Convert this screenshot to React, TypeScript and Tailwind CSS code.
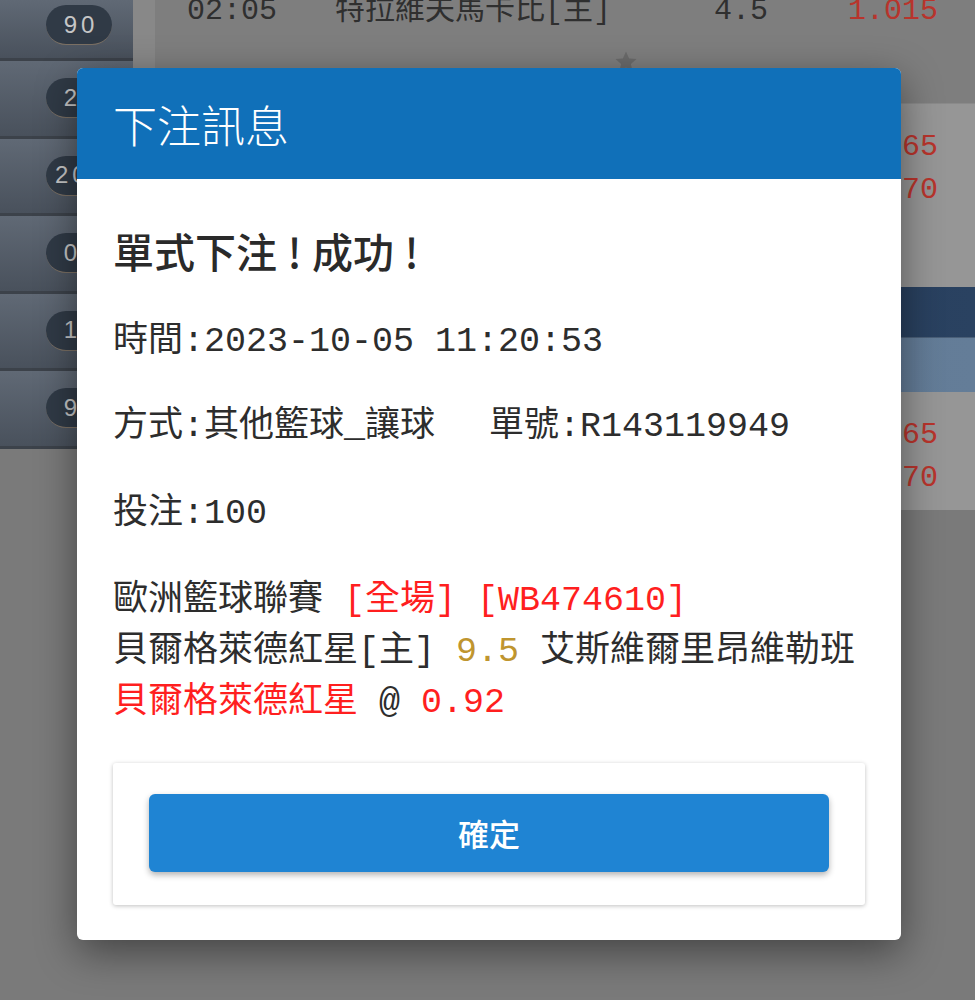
export default function App() {
  const badges = ["90", "25", "200", "05", "16", "98"];

  return (
    <div className="relative h-[1000px] w-[975px] overflow-hidden bg-[#7a7a7a] font-['Noto_Sans_CJK_TC',sans-serif]">
      {/* page behind the dialog */}
      <div className="flex">
        <aside className="w-[133px] shrink-0">
          {badges.map((b, i) => (
            <div
              key={i}
              className={`flex items-center justify-end border-b-[3px] border-[#3c424a] bg-gradient-to-b from-[#606975] to-[#49515c] pr-[21px] ${
                i === 0 ? "h-[61px] pb-[8px]" : "h-[77.5px]"
              }`}
            >
              <span className="flex h-[40px] w-[66px] items-center justify-center rounded-full border-b border-[#7b7064] bg-[#303a46] pl-[4px] font-['Liberation_Sans',sans-serif] text-[24px] tracking-[4px] text-[#c6c6c6]">
                {b}
              </span>
            </div>
          ))}
        </aside>

        <div className="h-[510px] w-[22px] shrink-0 bg-[#888888]" />

        <main className="min-w-0 flex-1 font-['Liberation_Mono','Noto_Sans_CJK_TC',monospace] text-[30px]">
          <div className="h-[103px] bg-[#7e7e7e]">
            <div className="flex pl-[32px] leading-[22px] text-[#2f2f2f]">
              <span className="w-[148px]">02:05</span>
              <span className="w-[379px]">特拉維夫馬卡比[主]</span>
              <span className="w-[134px]">4.5</span>
              <span className="text-[#b8342c]">1.015</span>
            </div>
            <div className="mt-[28px] pl-[459px]">
              <svg width="24" height="24" viewBox="0 0 24 24">
                <path
                  d="M12 1.5l3.1 6.9 7.4.7-5.6 5 1.7 7.4L12 17.6l-6.6 3.9 1.7-7.4-5.6-5 7.4-.7z"
                  fill="#6b6b6b"
                />
              </svg>
            </div>
          </div>

          <div className="h-[184px] border-t border-[#8a8a8a] bg-[#969696] pl-[693px] pt-[22px] leading-[43px] text-[#b8342c]">
            <div>1.865</div>
            <div>1.870</div>
          </div>

          <div className="h-[50px] bg-gradient-to-r from-[#203550] to-[#2a4261]" />
          <div className="h-[55px] border-t border-[#4a5f78] bg-gradient-to-r from-[#5a7390] to-[#647d98]" />

          <div className="h-[118px] bg-[#969696] pl-[693px] pt-[22px] leading-[43px] text-[#b8342c]">
            <div>1.865</div>
            <div>1.870</div>
          </div>
        </main>
      </div>

      {/* dialog */}
      <div className="absolute inset-0 flex items-start justify-center pl-[3px] pt-[68px]">
        <div className="w-[824px] overflow-hidden rounded-md bg-white shadow-[0_12px_40px_rgba(0,0,0,0.45)]">
          <div className="flex h-[111px] items-center bg-[#1070b9] px-[36px]">
            <h2 className="text-[44px] font-light leading-none text-white">下注訊息</h2>
          </div>

          <div className="px-[36px] pb-[35px] pt-[46px] text-[#2d2d2d]">
            <h3 className="text-[41px] font-medium leading-[50px] text-[#2a2a2a]">
              單式下注<span className="inline-block w-[35px] text-center">!</span>成功
              <span className="inline-block w-[35px] text-center">!</span>
            </h3>

            <div className="font-['Liberation_Mono','Noto_Sans_CJK_TC',monospace] text-[35px] leading-[51px]">
              <p className="mt-[42px]">時間:2023-10-05 11:20:53</p>
              <p className="mt-[34px]">
                方式:其他籃球_讓球
                <span className="ml-[54px]">單號:R143119949</span>
              </p>
              <p className="mt-[36px]">投注:100</p>
              <div className="mt-[36px]">
                <p>
                  歐洲籃球聯賽 <span className="text-[#ff1f1f]">[全場] [WB474610]</span>
                </p>
                <p>
                  貝爾格萊德紅星[主] <span className="text-[#bf952f]">9.5</span> 艾斯維爾里昂維勒班
                </p>
                <p>
                  <span className="text-[#ff1f1f]">貝爾格萊德紅星</span> @{" "}
                  <span className="text-[#ff1f1f]">0.92</span>
                </p>
              </div>
            </div>

            <div className="mt-[34px] rounded-[3px] bg-white px-[36px] pb-[33px] pt-[31px] shadow-[0_1px_4px_rgba(0,0,0,0.25)]">
              <button className="h-[78px] w-full rounded-[6px] bg-[#1f84d3] text-[31px] font-medium text-white shadow-[0_3px_6px_rgba(0,0,0,0.3)]">
                確定
              </button>
            </div>
          </div>
        </div>
      </div>
    </div>
  );
}
